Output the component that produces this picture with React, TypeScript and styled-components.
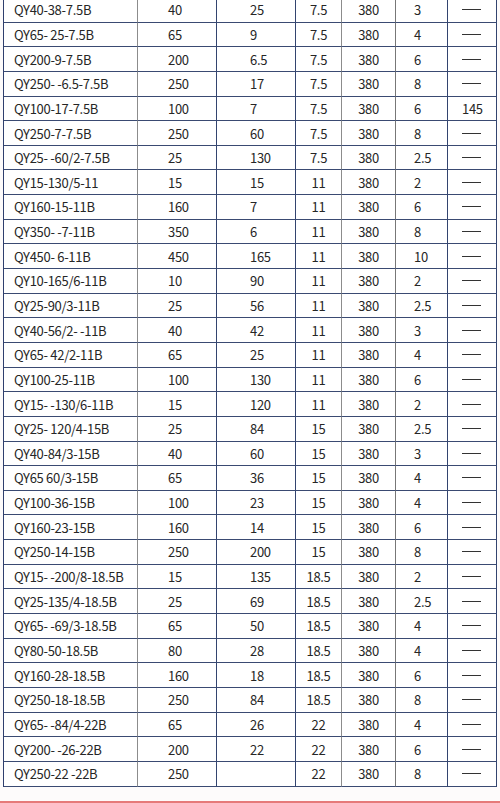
import React from "react";
import styled, { createGlobalStyle } from "styled-components";

const Global = createGlobalStyle`
  html, body { margin: 0; padding: 0; background: #ffffff; }
  body { width: 500px; height: 803px; overflow: hidden; }
`;

const Page = styled.div`
  width: 500px;
  height: 803px;
  overflow: hidden;
  background: #fdfbfb;
  display: flex;
  flex-direction: column;
`;

const Grid = styled.div`
  margin: -3px 0 0 3px;
  width: 494px;
  display: grid;
  grid-template-columns: 134px 79px 79px 46px 54px 52px 49px;
  grid-auto-rows: 24.65px;
  border-left: 1px solid #2f3f6e;
  border-top: 1px solid #2f3f6e;
  background: #ffffff;
  box-sizing: border-box;
  font-family: "Noto Sans CJK SC", "Noto Sans", sans-serif;
  font-size: 13px;
  color: #262626;
`;

const Cell = styled.div<{ $pad: number | null; $line: string }>`
  box-sizing: border-box;
  border-right: 1px solid ${(p) => p.$line};
  border-bottom: 1px solid #3a4a72;
  display: flex;
  align-items: center;
  justify-content: ${(p) => (p.$pad === null ? "center" : "flex-start")};
  padding-left: ${(p) => (p.$pad === null ? 0 : p.$pad)}px;
  white-space: pre;
  letter-spacing: -0.3px;
  line-height: 1;
`;

const Dash = styled.span`
  display: block;
  width: 19px;
  height: 1px;
  background: #333;
`;

const Spacer = styled.div`
  flex: 1;
`;

const RedRule = styled.div`
  height: 2px;
  background: #e67a7a;
`;

const lines = ["#8c8c8c", "#33446f", "#33446f", "#8c8c8c", "#777777", "#33446f", "#33446f"];
const pads: (number | null)[] = [10, 30, 33, null, null, 18, 14];

const rows: string[][] = [
  ["QY40-38-7.5B", "40", "25", "7.5", "380", "3", "-"],
  ["QY65- 25-7.5B", "65", "9", "7.5", "380", "4", "-"],
  ["QY200-9-7.5B", "200", "6.5", "7.5", "380", "6", "-"],
  ["QY250- -6.5-7.5B", "250", "17", "7.5", "380", "8", "-"],
  ["QY100-17-7.5B", "100", "7", "7.5", "380", "6", "145"],
  ["QY250-7-7.5B", "250", "60", "7.5", "380", "8", "-"],
  ["QY25- -60/2-7.5B", "25", "130", "7.5", "380", "2.5", "-"],
  ["QY15-130/5-11", "15", "15", "11", "380", "2", "-"],
  ["QY160-15-11B", "160", "7", "11", "380", "6", "-"],
  ["QY350- -7-11B", "350", "6", "11", "380", "8", "-"],
  ["QY450- 6-11B", "450", "165", "11", "380", "10", "-"],
  ["QY10-165/6-11B", "10", "90", "11", "380", "2", "-"],
  ["QY25-90/3-11B", "25", "56", "11", "380", "2.5", "-"],
  ["QY40-56/2- -11B", "40", "42", "11", "380", "3", "-"],
  ["QY65- 42/2-11B", "65", "25", "11", "380", "4", "-"],
  ["QY100-25-11B", "100", "130", "11", "380", "6", "-"],
  ["QY15- -130/6-11B", "15", "120", "11", "380", "2", "-"],
  ["QY25- 120/4-15B", "25", "84", "15", "380", "2.5", "-"],
  ["QY40-84/3-15B", "40", "60", "15", "380", "3", "-"],
  ["QY65 60/3-15B", "65", "36", "15", "380", "4", "-"],
  ["QY100-36-15B", "100", "23", "15", "380", "4", "-"],
  ["QY160-23-15B", "160", "14", "15", "380", "6", "-"],
  ["QY250-14-15B", "250", "200", "15", "380", "8", "-"],
  ["QY15- -200/8-18.5B", "15", "135", "18.5", "380", "2", "-"],
  ["QY25-135/4-18.5B", "25", "69", "18.5", "380", "2.5", "-"],
  ["QY65- -69/3-18.5B", "65", "50", "18.5", "380", "4", "-"],
  ["QY80-50-18.5B", "80", "28", "18.5", "380", "4", "-"],
  ["QY160-28-18.5B", "160", "18", "18.5", "380", "6", "-"],
  ["QY250-18-18.5B", "250", "84", "18.5", "380", "8", "-"],
  ["QY65- -84/4-22B", "65", "26", "22", "380", "4", "-"],
  ["QY200- -26-22B", "200", "22", "22", "380", "6", "-"],
  ["QY250-22 -22B", "250", "", "22", "380", "8", "-"],
];

export default function App() {
  return (
    <Page>
      <Global />
      <Grid>
        {rows.map((r, ri) =>
          r.map((v, ci) => (
            <Cell key={`${ri}-${ci}`} $pad={pads[ci]} $line={lines[ci]}>
              {v === "-" ? <Dash /> : v}
            </Cell>
          ))
        )}
      </Grid>
      <Spacer />
      <RedRule />
    </Page>
  );
}
